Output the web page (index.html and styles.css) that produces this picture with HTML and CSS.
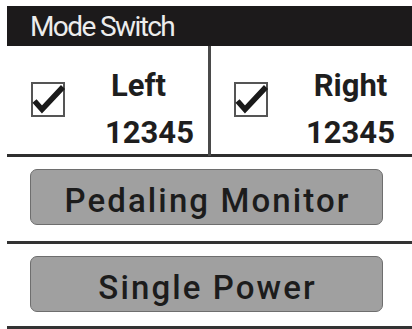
FILE: index.html
```html
<!DOCTYPE html>
<html>
<head>
<meta charset="utf-8">
<link rel="stylesheet" href="styles.css">
</head>
<body>
<div class="panel">
  <div class="header">Mode Switch</div>
  <div class="sides">
    <div class="side side-left">
      <svg class="check" viewBox="0 0 36 36" width="36" height="36">
        <rect x="1" y="1" width="32" height="33" fill="none" stroke="#555" stroke-width="2"/>
        <path d="M3.5 19 L11 27.5 L32 5" fill="none" stroke="#1a1a1a" stroke-width="5.5"/>
      </svg>
      <div class="labels labels-left">
        <span class="name">Left</span>
        <span class="value">12345</span>
      </div>
    </div>
    <div class="divider"></div>
    <div class="side side-right">
      <svg class="check" viewBox="0 0 36 36" width="36" height="36">
        <rect x="1" y="1" width="32" height="33" fill="none" stroke="#555" stroke-width="2"/>
        <path d="M3.5 19 L11 27.5 L32 5" fill="none" stroke="#1a1a1a" stroke-width="5.5"/>
      </svg>
      <div class="labels labels-right">
        <span class="name">Right</span>
        <span class="value">12345</span>
      </div>
    </div>
  </div>
  <div class="btn-row first">
    <div class="btn">Pedaling Monitor</div>
  </div>
  <div class="btn-row second">
    <div class="btn">Single Power</div>
  </div>
</div>
</body>
</html>
```
FILE: styles.css
```css
html, body {
  margin: 0;
  padding: 0;
  background: #fff;
}
body {
  font-family: Roboto, "Liberation Sans", sans-serif;
  color: #1e1e1e;
}
.panel {
  margin-left: 7px;
  padding-top: 6px;
}
.header {
  height: 40px;
  background: #1c1a1b;
  color: #ececec;
  font-size: 28px;
  line-height: 41px;
  padding-left: 23px;
  letter-spacing: -1.6px;
}
.sides {
  display: grid;
  grid-template-columns: 200px 4px 1fr;
  height: 108px;
  border-bottom: 3px solid #2e2e2e;
}
.divider {
  background: #4a4a4a;
  width: 3px;
  margin-left: 1px;
}
.side {
  display: flex;
  align-items: flex-start;
}
.check {
  margin-top: 36px;
  flex: none;
}
.side-left .check { margin-left: 24px; }
.side-right .check { margin-left: 23px; }
.labels {
  display: flex;
  flex-direction: column;
  font-weight: bold;
  font-size: 31px;
  line-height: 47px;
  margin-top: 16px;
}
.labels-left { margin-left: 38px; }
.labels-right { margin-left: 36px; align-items: center; }
.labels-left .name { margin-left: 6px; }
.btn-row {
  padding: 12px 0 16px 23px;
  border-bottom: 3px solid #333;
}
.btn-row.second {
  padding-bottom: 14px;
}
.btn {
  width: 353px;
  height: 56px;
  box-sizing: border-box;
  border: 1px solid #6e6e6e;
  border-radius: 7px;
  background: #a0a0a0;
  display: flex;
  align-items: center;
  justify-content: center;
  font-size: 33px;
  font-weight: 500;
  letter-spacing: 2.1px;
  padding-left: 2.1px;
  padding-top: 6px;
  color: #1c1c1c;
}
```
